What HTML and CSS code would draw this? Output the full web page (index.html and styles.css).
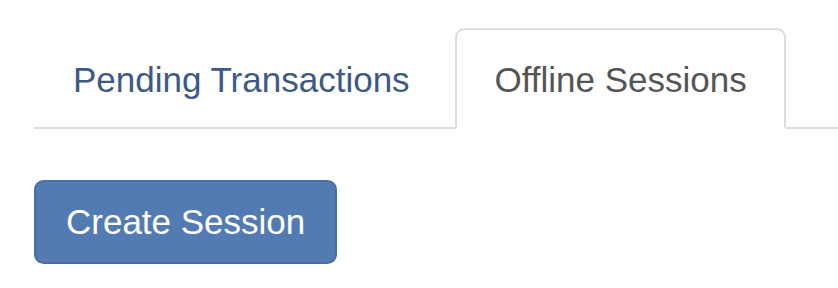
FILE: index.html
```html
<!DOCTYPE html>
<html lang="en">

<head>
    <meta charset="UTF-8">
    <meta name="viewport" content="width=device-width, initial-scale=1.0">
    <title>Sessions</title>
    <link rel="stylesheet" href="styles.css">
</head>

<body>

    <div class="page">

        <ul class="tabs">
            <li><a href="#">Pending Transactions</a></li>
            <li class="active"><a href="#">Offline Sessions</a></li>
        </ul>

        <div class="tab-content">
            <button class="btn">Create Session</button>
        </div>

    </div>

</body>

</html>
```

FILE: styles.css
```css
* {
    box-sizing: border-box;
}

html,
body {
    margin: 0;
    background-color: #fff;
    font-family: "Liberation Sans", "Arial", sans-serif;
    font-size: 35px;
    line-height: 48px;
    color: #555;
}

.page {
    padding: 28px 0 0 34px;
}

.tabs {
    display: flex;
    margin: 0;
    padding: 0;
    list-style: none;
    border-bottom: 2.4px solid #ddd;
}

.tabs li {
    margin-bottom: -2.4px;
}

.tabs a {
    display: block;
    margin-right: 6.8px;
    padding: 26px 37px 23px;
    border: 2.4px solid transparent;
    border-radius: 9.6px 9.6px 0 0;
    color: #3d5a86;
    text-decoration: none;
}

.tabs .active a {
    color: #555;
    background-color: #fff;
    border-color: #ddd;
    border-bottom-color: transparent;
}

.tab-content {
    padding-top: 51px;
}

.btn {
    padding: 16px 30px;
    border: 2.4px solid #4a6ea4;
    border-radius: 9.6px;
    background-color: #527bb3;
    color: #fff;
    font-family: inherit;
    font-size: 35px;
    line-height: 48px;
    cursor: pointer;
}
```
